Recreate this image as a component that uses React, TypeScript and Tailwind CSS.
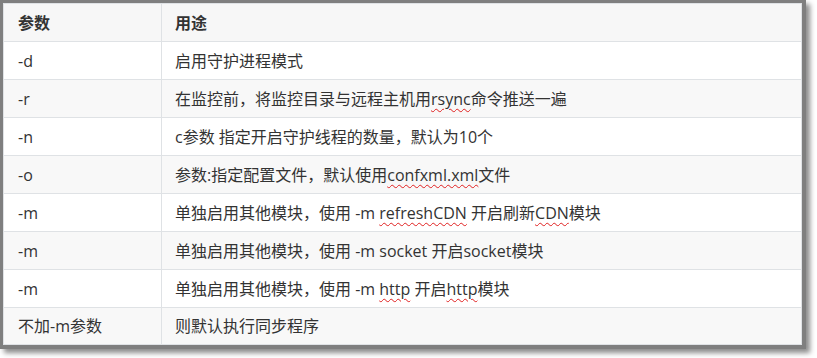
const rows: { flag: string; desc: React.ReactNode }[] = [
  { flag: '-d', desc: '启用守护进程模式' },
  {
    flag: '-r',
    desc: (
      <>
        在监控前，将监控目录与远程主机用<Typo>rsync</Typo>命令推送一遍
      </>
    ),
  },
  { flag: '-n', desc: 'c参数 指定开启守护线程的数量，默认为10个' },
  {
    flag: '-o',
    desc: (
      <>
        参数:指定配置文件，默认使用<Typo>confxml.xml</Typo>文件
      </>
    ),
  },
  {
    flag: '-m',
    desc: (
      <>
        单独启用其他模块，使用 -m <Typo>refreshCDN</Typo> 开启刷新<Typo>CDN</Typo>模块
      </>
    ),
  },
  { flag: '-m', desc: '单独启用其他模块，使用 -m socket 开启socket模块' },
  {
    flag: '-m',
    desc: (
      <>
        单独启用其他模块，使用 -m <Typo>http</Typo> 开启<Typo>http</Typo>模块
      </>
    ),
  },
  { flag: '不加-m参数', desc: '则默认执行同步程序' },
];

// spell-checker squiggle under unknown words
function Typo({ children }: { children: React.ReactNode }) {
  return (
    <span className="underline decoration-wavy decoration-[#e02020] decoration-1 underline-offset-[3px]">
      {children}
    </span>
  );
}

export default function App() {
  return (
    <div
      className="h-[358px] w-[817px] bg-white text-[16px] text-[#333]"
      style={{ fontFamily: '"Open Sans", "Noto Sans CJK SC", sans-serif' }}
    >
      <div className="w-[806px] border-[3px] border-r-4 border-b-4 border-[#7f7f7f] shadow-[4px_4px_5px_rgba(0,0,0,0.45)]">
        <div className="border border-[#dfe2e5]">
          <div className="grid h-[38px] grid-cols-[158px_1fr] border-b border-[#dfe2e5] bg-[#f7f7f7] font-bold">
            <div className="flex items-center border-r border-[#dfe2e5] px-[14px]">参数</div>
            <div className="flex items-center px-[13px]">用途</div>
          </div>
          {rows.map((row, i) => {
            const last = i === rows.length - 1;
            return (
              <div
                key={i}
                className={`grid grid-cols-[158px_1fr] border-[#dfe2e5] ${
                  last ? 'h-[36px]' : 'h-[38px] border-b'
                } ${i % 2 === 1 ? 'bg-[#f8f8f8]' : 'bg-white'}`}
              >
                <div className="flex items-center border-r border-[#dfe2e5] px-[14px]">{row.flag}</div>
                <div className="flex items-center px-[13px] whitespace-pre">{row.desc}</div>
              </div>
            );
          })}
        </div>
      </div>
    </div>
  );
}
